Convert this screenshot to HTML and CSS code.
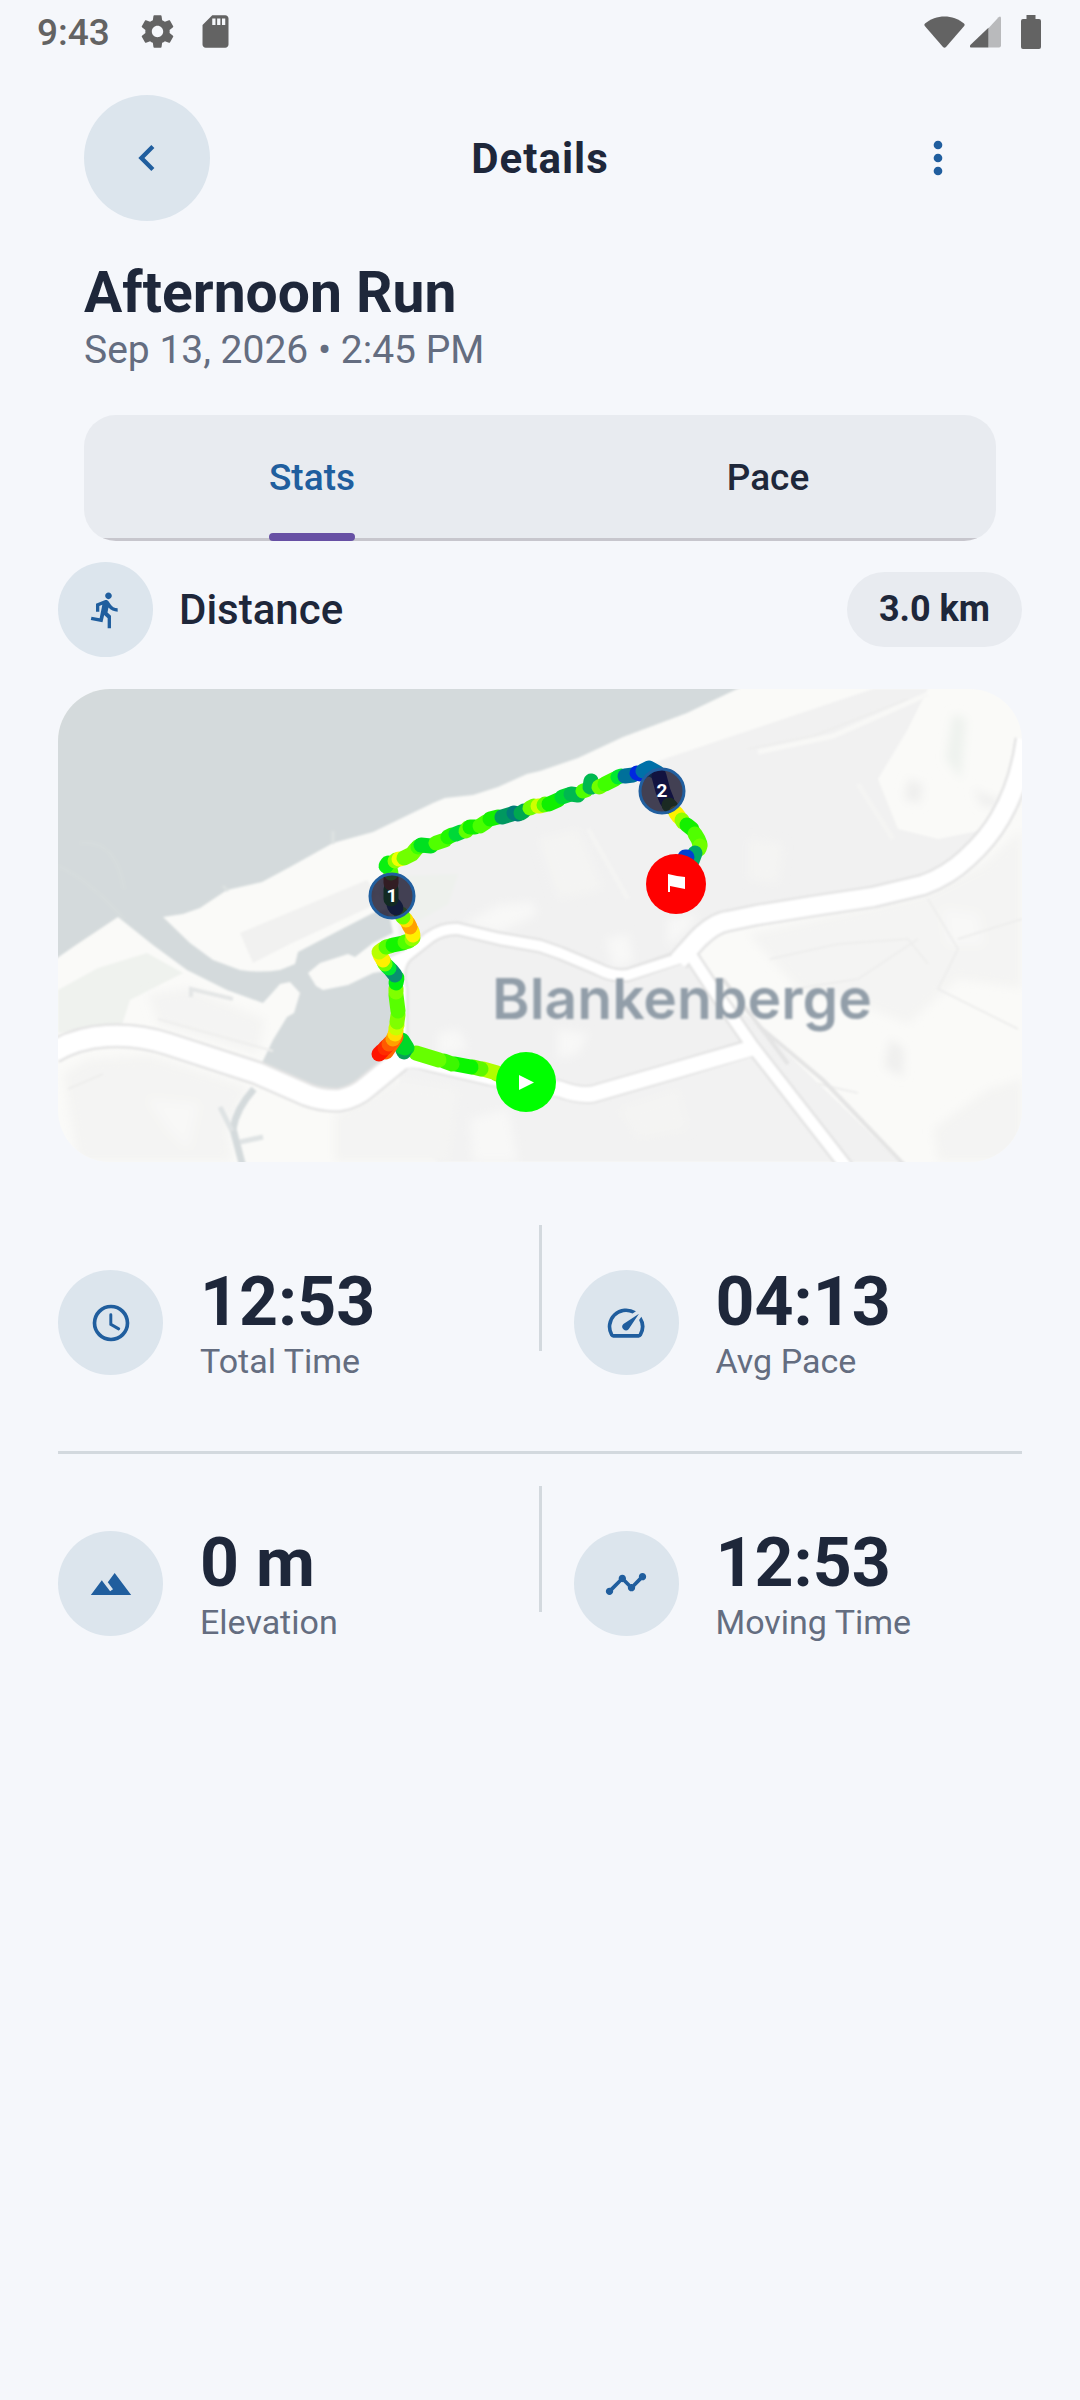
FILE: index.html
```html
<!DOCTYPE html>
<html lang="en">
<head>
    <meta charset="UTF-8">
    <meta name="viewport" content="width=device-width, initial-scale=1.0">
    <title>Afternoon Run - Details</title>
    <link rel="stylesheet" href="styles.css">
</head>
<body>
    <!-- Status bar -->
    <div class="status-bar">
        <span class="clock">9:43</span>
        <svg class="status-icon" viewBox="0 0 24 24"><path d="M19.43 12.98c.04-.32.07-.64.07-.98s-.03-.66-.07-.98l2.11-1.65c.19-.15.24-.42.12-.64l-2-3.46c-.12-.22-.39-.3-.61-.22l-2.49 1c-.52-.4-1.08-.73-1.69-.98l-.38-2.65C14.46 2.18 14.25 2 14 2h-4c-.25 0-.46.18-.49.42l-.38 2.65c-.61.25-1.17.59-1.69.98l-2.49-1c-.23-.09-.49 0-.61.22l-2 3.46c-.13.22-.07.49.12.64l2.11 1.65c-.04.32-.07.65-.07.98s.03.66.07.98l-2.11 1.65c-.19.15-.24.42-.12.64l2 3.46c.12.22.39.3.61.22l2.49-1c.52.4 1.08.73 1.69.98l.38 2.65c.03.24.24.42.49.42h4c.25 0 .46-.18.49-.42l.38-2.65c.61-.25 1.17-.59 1.69-.98l2.49 1c.23.09.49 0 .61-.22l2-3.46c.12-.22.07-.49-.12-.64l-2.11-1.65zM12 15.5c-1.93 0-3.5-1.57-3.5-3.5s1.57-3.5 3.5-3.5 3.5 1.57 3.5 3.5-1.57 3.5-3.5 3.5z"/></svg>
        <svg class="status-icon" viewBox="0 0 24 24"><path d="M18 2h-8L4.02 8 4 20c0 1.1.9 2 2 2h12c1.1 0 2-.9 2-2V4c0-1.1-.9-2-2-2zm-6 6h-2V4h2v4zm3 0h-2V4h2v4zm3 0h-2V4h2v4z"/></svg>
        <div class="status-right">
            <svg class="wifi" viewBox="0 0 41 32"><path d="M1 7.500C12-2 29-2 40 7.500q1.200 1.200.2 2.500L22 31q-1.500 1.600-3 0L.8 10q-1-1.300.2-2.500z"/></svg>
            <svg class="signal" viewBox="0 0 32 32"><path class="dim" d="M19 12 29.500.8Q32-1 32 2v28q0 2-2 2H19z"/><path d="M19 11.500V32H2q-3.500 0-1.400-2.800z"/></svg>
            <svg class="battery" viewBox="0 0 20 34"><path d="M5.500 0h9v4H18q2 0 2 2v26q0 2-2 2H2q-2 0-2-2V6q0-2 2-2h3.500z"/></svg>
        </div>
    </div>

    <!-- Top navigation -->
    <header class="header">
        <button type="button" class="back-btn" aria-label="Back">
            <svg viewBox="0 0 24 24"><path d="M15.410 7.410 14 6l-6 6 6 6 1.410-1.410L10.830 12z"/></svg>
        </button>
        <h1>Details</h1>
        <button type="button" class="menu-btn" aria-label="More options">
            <svg viewBox="0 0 24 24"><circle cx="12" cy="6" r="2"/><circle cx="12" cy="12" r="2"/><circle cx="12" cy="18" r="2"/></svg>
        </button>
    </header>

    <section class="activity">
        <h2>Afternoon Run</h2>
        <p>Sep 13, 2026 • 2:45 PM</p>
    </section>

    <div class="tabs" role="tablist">
        <button type="button" class="tab active" role="tab" aria-selected="true"><span>Stats</span></button>
        <button type="button" class="tab" role="tab" aria-selected="false"><span>Pace</span></button>
    </div>

    <main>
        <div class="distance">
            <div class="icon-circle small">
                <svg viewBox="0 0 24 24"><path d="M13.490 5.480c1.100 0 2-.9 2-2s-.9-2-2-2-2 .9-2 2 .9 2 2 2zm-3.600 13.900l1-4.400 2.100 2v6h2v-7.500l-2.100-2 .6-3c1.300 1.500 3.300 2.500 5.500 2.500v-2c-1.900 0-3.500-1-4.300-2.400l-1-1.600c-.4-.6-1-1-1.700-1-.3 0-.5.1-.8.1l-5.200 2.200v4.700h2v-3.400l1.800-.7-1.600 8.100-4.900-1-.4 2 7 1.400z"/></svg>
            </div>
            <span class="distance-label">Distance</span>
            <span class="pill">3.0 km</span>
        </div>

        <!-- Route map -->
        <svg class="map" viewBox="0 0 964 473" preserveAspectRatio="xMidYMid slice" role="img" aria-label="Route map">
            <defs>
                <filter id="soft" x="-2%" y="-2%" width="104%" height="104%"><feGaussianBlur stdDeviation="1.3"/></filter>
                <filter id="patchy" x="-5%" y="-5%" width="110%" height="110%"><feGaussianBlur stdDeviation="5"/></filter>
            </defs>
            <rect width="964" height="473" fill="#fafaf8"/>
            <g filter="url(#soft)">
                <!-- Built-up areas -->
                <path fill="#f1f1f1" d="M815 0 782 11 609 69 480 118 355 163 328 180 319 204 340 232 342 268 349 371 432 388 502 399 535 406 695 359 785 473H842L702 338 655 298 635 268 662 234 755 218 865 196 909 171 930 140 880 150 840 140 820 90 850 40 870 0z"/>
                <path fill="#f2f2f2" d="M342 373 432 390 535 408 695 361 785 473H380L340 440z"/>
                <path fill="#f1f1f0" d="M182 244 309 191 319 204 312 218 232 255 195 274z"/>
                <path fill="#eff2ee" d="M0 301 40 279 89 264 125 284 72 311 64 336 0 344z"/>
                <path fill="#eef1ed" d="M326 188 400 185 390 215 345 240z"/>
            </g>
            <g filter="url(#patchy)">
                <path fill="#f4f4f3" d="M5 385 30 370 92 366 190 398 170 441 175 473H20zM132 299 207 330 200 365 100 335 90 305zM690 245 865 205 925 175 964 140V300L900 290 850 335 800 315 740 300zM875 440 930 400 964 390V473H880zM276 425 340 390 400 400 390 473H276z"/>
                <path fill="#f8f8f7" d="M405 236 440 216 476 213 478 226 440 244zM548 250 570 245 576 272 556 280zM610 230 640 225 630 240 610 258zM500 340 530 345 520 365 500 370zM380 345 400 340 410 360 380 368zM412 430 450 420 460 473H415zM885 220 920 225 925 255 890 255zM90 410 140 415 130 460 110 440z"/>
                <path fill="#f4f4f3" d="M480 150 520 140 545 200 500 210zM690 150 725 155 720 195 690 190zM560 420 620 400 630 440 580 450z"/>
                <path fill="#efefee" d="M850 90 865 95 862 115 846 110zM832 350 846 360 845 388 826 378zM915 100 950 115 925 118z"/>
                <path fill="#eef2ee" d="M895 25 908 30 903 90 888 70z"/>
            </g>
            <g filter="url(#soft)">
                <!-- Sea and harbour -->
                <path fill="#d4dadc" d="M-5-5H690L679 0 654 12 629 24 565 48 520 69 482 82 469 85 440 98 415 106 387 109 375 114 315 143 275 154 232 178 204 193 169 201 142 219 125 225 105 228 132 254 155 271 182 281Q202 284 222 281L237 275 240 263 282 241 315 224 330 220 335 244 315 254 297 268 290 265 262 274 250 284 258 297 265 301 290 296 315 284 334 281V341L328 362 322 374Q310 392 295 396 280 404 265 401L239 394 202 378 215 351 229 328 236 324 242 304 232 293 222 295 215 303 205 314 169 301 129 281 95 256 60 228 15 258-5 272z"/>
                <path fill="none" stroke="#d4dadc" stroke-width="7" d="M196 400Q178 420 175 440L185 478"/>
                <path fill="none" stroke="#dfe3e4" stroke-width="5" d="M162 418 174 442M182 453 205 448"/>
                <path fill="none" stroke="#dde2e2" stroke-width="3" d="M275 155V142M170 202 165 197"/>
                <path fill="none" stroke="#d6dcdd" stroke-width="4" d="M0 177Q30 190 66 230M22 154Q58 150 66 200"/>
                <path fill="none" stroke="#e4e6e6" stroke-width="4" d="M133 308V300L175 310"/>
                <!-- Minor streets -->
                <path fill="none" stroke="#f8f8f6" stroke-width="5" d="M700 63 775 47 870 5"/>
                <path fill="none" stroke="#f4f4f3" stroke-width="5" d="M530 140 570 210M800 95 835 150"/>
                <path fill="none" stroke="#eeeeed" stroke-width="2" d="M690 60 755 47 850 10M712 270 780 255 850 250 870 275M735 300 800 290 860 250M870 210 900 260 880 300 960 340M900 250 964 230M760 395 800 404M10 400 45 385M100 330 215 362"/>
                <!-- Road casings -->
                <g fill="none" stroke="#e4e4e4" stroke-linejoin="round">
                    <path stroke-width="25" d="M-5 363Q18 349 49 347T110 355L199 384 249 406Q265 412 282 411 298 408 309 398L342 371"/>
                    <path stroke-width="19" d="M342 371Q356 368 372 374L432 388 502 400Q520 407 535 405L615 382 695 358"/>
                    <path stroke-width="15" d="M330 275 349 266 372 248Q385 239 400 240L442 250 482 257 502 264 540 280Q555 288 570 286L622 268M349 266Q337 278 343 300V371"/>
                    <path stroke-width="23" d="M620 272 640 250Q656 234 670 232L699 226 755 217 815 208 865 196Q890 187 909 169 930 150 942 129 962 95 968 50"/>
                    <path stroke-width="16" d="M632 265 655 300 695 358 790 480"/>
                    <path stroke-width="4" d="M665 290 702 338 765 391 850 480M700 335 730 375"/>
                </g>
                <!-- Road surfaces -->
                <g fill="none" stroke="#fff" stroke-linejoin="round">
                    <path stroke-width="20" d="M-5 363Q18 349 49 347T110 355L199 384 249 406Q265 412 282 411 298 408 309 398L342 371"/>
                    <path stroke-width="15" d="M335 374Q356 368 372 374L432 388 502 400Q520 407 535 405L615 382 698 358"/>
                    <path stroke-width="10" d="M330 275 349 266 372 248Q385 239 400 240L442 250 482 257 502 264 540 280Q555 288 570 286L626 268M349 266Q337 278 343 300V371"/>
                    <path stroke-width="18" d="M620 272 640 250Q656 234 670 232L699 226 755 217 815 208 865 196Q890 187 909 169 930 150 942 129 962 95 968 50"/>
                    <path stroke-width="11" d="M632 265 655 300 695 358 790 480"/>
                </g>
                <text class="map-label" x="624" y="330">Blankenberge</text>
            </g>

            <!-- Track coloured by speed -->
            <g class="track">
                <path stroke="#8cff00" d="M468 393 439 385"/>
                <path stroke="#b0ff00" d="M439 384 425 380"/>
                <path stroke="#5cf800" d="M423 380 415 378"/>
                <path stroke="#0af500" d="M413 378 397 375"/>
                <path stroke="#3cf800" d="M394 375 386 372"/>
                <path stroke="#66ff00" d="M381 371 358 364"/>
                <path stroke="#00d828" d="M344 351 349 359"/>
                <path stroke="#08a058" d="M346 363 345 361"/>
                <path stroke="#00d828" d="M344 358 347 359"/>
                <path stroke="#ff6400" d="M338 348 328 363"/>
                <path stroke="#ff1400" d="M321 365 324 362"/>
                <path stroke="#ff2c00" d="M327 359 329 357"/>
                <path stroke="#ff5a00" d="M331 355 333 353"/>
                <path stroke="#ffa000" d="M335 350 336 348"/>
                <path stroke="#ffe000" d="M337 345 338 342"/>
                <path stroke="#c8ff00" d="M338 339 339 336"/>
                <path stroke="#80ff00" d="M339 333 340 326"/>
                <path stroke="#58ff00" d="M340 322 338 306"/>
                <path stroke="#80ff00" d="M338 303 338 299"/>
                <path stroke="#00f010" d="M338 294 339 289"/>
                <path stroke="#089070" d="M337 286 333 281"/>
                <path stroke="#00e830" d="M331 279 329 277"/>
                <path stroke="#70ff00" d="M327 275 326 273"/>
                <path stroke="#fff000" d="M325 271 322 266"/>
                <path stroke="#b8ff00" d="M321 263 325 260"/>
                <path stroke="#58ff00" d="M328 258 332 257"/>
                <path stroke="#14f500" d="M335 256 345 254"/>
                <path stroke="#50ff00" d="M347 253 351 252"/>
                <path stroke="#90ff00" d="M354 250 355 249"/>
                <path stroke="#fff000" d="M355 246 354 242"/>
                <path stroke="#ffa000" d="M352 238 350 234"/>
                <path stroke="#ffe000" d="M348 231 347 230"/>
                <path stroke="#70ff00" d="M345 228 343 225"/>
                <path stroke="#003878" d="M338 219 336 216"/>
                <path stroke="#008000" d="M333 210 333 200"/>
                <path stroke="#a04000" d="M333 194 333 188"/>
                <path stroke="#50ff00" d="M333 184 332 180"/>
                <path stroke="#0af010" d="M328 177 330 174"/>
                <path stroke="#88ff00" d="M337 172 338 171"/>
                <path stroke="#f0ff00" d="M341 170 342 170"/>
                <path stroke="#70ff00" d="M346 169 354 165 358 160"/>
                <path stroke="#3cff00" d="M360 158 362 157"/>
                <path stroke="#00e020" d="M363 156 373 157"/>
                <path stroke="#50ff00" d="M378 154 387 151"/>
                <path stroke="#20f800" d="M390 148 394 146"/>
                <path stroke="#00d838" d="M398 145 403 143"/>
                <path stroke="#60ff00" d="M408 142 410 139"/>
                <path stroke="#10f000" d="M412 138 417 138"/>
                <path stroke="#48ff00" d="M422 137 428 133"/>
                <path stroke="#14f000" d="M432 130 440 128"/>
                <path stroke="#009860" d="M444 128 454 125"/>
                <path stroke="#007c78" d="M456 124 460 125"/>
                <path stroke="#00a850" d="M463 124 466 122"/>
                <path stroke="#70ff00" d="M472 119 476 117"/>
                <path stroke="#d0ff00" d="M480 117 482 117"/>
                <path stroke="#60ff00" d="M486 116 487 115"/>
                <path stroke="#10f000" d="M491 115 500 111"/>
                <path stroke="#00d830" d="M504 108 510 106"/>
                <path stroke="#00b850" d="M513 105 520 106"/>
                <path stroke="#50ff00" d="M525 102 528 101"/>
                <path stroke="#00b850" d="M532 98 533 92 534 98"/>
                <path stroke="#70ff00" d="M541 98 543 97"/>
                <path stroke="#40ff00" d="M547 95 557 90"/>
                <path stroke="#00e830" d="M560 88 563 87"/>
                <path stroke="#00709a" d="M567 87 575 86"/>
                <path stroke="#0028e0" d="M579 84 582 85"/>
                <path stroke="#0070a8" d="M585 82 591 79 600 84"/>
                <path stroke="#001090" d="M601 87 605 102 609 112"/>
                <path stroke="#308000" d="M611 116 613 118"/>
                <path stroke="#fff000" d="M618 124 621 128"/>
                <path stroke="#90ff00" d="M624 131 625 133"/>
                <path stroke="#14f000" d="M629 136 634 140"/>
                <path stroke="#50ff00" d="M637 145 640 150 642 155"/>
                <path stroke="#70ff00" d="M642 157 641 160"/>
                <path stroke="#00a868" d="M637 164 634 172"/>
                <path stroke="#0040d0" d="M629 168 627 168"/>
            </g>

            <!-- Kilometre markers -->
            <g class="km-marker">
                <circle cx="334" cy="207" r="22"/>
                <text x="334" y="213">1</text>
                <circle cx="604" cy="102" r="22"/>
                <text x="604" y="108">2</text>
            </g>

            <!-- Start and finish -->
            <circle cx="468" cy="393" r="30" fill="#0f0"/>
            <path fill="#fff" d="M461 386v15l15-7.500z"/>
            <circle cx="618" cy="195" r="30" fill="#f00"/>
            <path fill="#fff" d="M610 185 619 187 627 188V200L612 197V203H610z"/>
        </svg>

        <!-- Stats grid -->
        <div class="stats-row">
            <div class="stat">
                <div class="icon-circle">
                    <svg viewBox="0 0 24 24"><path d="M12 2a10 10 0 1 0 0 20 10 10 0 0 0 0-20zm0 18a8 8 0 1 1 0-16 8 8 0 0 1 0 16z"/><path class="hands" d="M11.900 7.500v5.200l4.300 2.500"/></svg>
                </div>
                <div class="stat-text">
                    <strong>12:53</strong>
                    <span>Total Time</span>
                </div>
            </div>
            <div class="divider"></div>
            <div class="stat">
                <div class="icon-circle">
                    <svg viewBox="0 0 24 24"><path d="M20.380 8.570l-1.230 1.850a8 8 0 0 1-.22 7.580H5.070A8 8 0 0 1 15.580 6.850l1.850-1.230A10 10 0 0 0 3.350 19a2 2 0 0 0 1.720 1h13.850a2 2 0 0 0 1.740-1 10 10 0 0 0-.27-10.440zm-9.790 6.840a2 2 0 0 0 2.830 0l5.660-8.490-8.490 5.660a2 2 0 0 0 0 2.830z"/></svg>
                </div>
                <div class="stat-text">
                    <strong>04:13</strong>
                    <span>Avg Pace</span>
                </div>
            </div>
        </div>
        <div class="stats-row">
            <div class="stat">
                <div class="icon-circle">
                    <svg viewBox="0 0 24 24"><path d="M14 6l-3.750 5 2.850 3.800-1.600 1.200C9.810 13.750 7 10 7 10l-6 8h22L14 6z"/></svg>
                </div>
                <div class="stat-text">
                    <strong>0 m</strong>
                    <span>Elevation</span>
                </div>
            </div>
            <div class="divider"></div>
            <div class="stat">
                <div class="icon-circle">
                    <svg viewBox="0 0 24 24"><path d="M23 8c0 1.100-.9 2-2 2-.18 0-.35-.02-.51-.07l-3.560 3.550c.05.16.07.34.07.52 0 1.100-.9 2-2 2s-2-.9-2-2c0-.18.02-.36.07-.52l-2.550-2.550c-.16.05-.34.07-.52.07s-.36-.02-.52-.07l-4.550 4.560c.05.16.07.33.07.51 0 1.100-.9 2-2 2s-2-.9-2-2 .9-2 2-2c.18 0 .35.02.51.07l4.560-4.550C8.020 9.360 8 9.180 8 9c0-1.100.9-2 2-2s2 .9 2 2c0 .18-.02.36-.07.52l2.550 2.550c.16-.05.34-.07.52-.07s.36.02.52.07l3.550-3.560C19.020 8.350 19 8.180 19 8c0-1.100.9-2 2-2s2 .9 2 2z"/></svg>
                </div>
                <div class="stat-text">
                    <strong>12:53</strong>
                    <span>Moving Time</span>
                </div>
            </div>
        </div>
    </main>
</body>
</html>
```
FILE: styles.css
```css
:root {
    --background: #f5f7fb;
    --primary: #205e9e;
    --primary-soft: #dce5ed;
    --surface: #e8ebf0;
    --divider: #d3d9de;
    --indicator: #6750a4;
    --text-dark: #1e273a;
    --text-medium: #646d80;
    --status: #636363;
}

/* Basic Reset */
* {
    box-sizing: border-box;
    margin: 0;
    padding: 0;
}

body {
    min-height: 100vh;
    background: var(--background);
    color: var(--text-dark);
    font-family: Roboto, sans-serif;
}

svg {
    display: block;
    fill: currentColor;
}

button {
    border: none;
    background: none;
    color: inherit;
    font: inherit;
    cursor: pointer;
}

/* Status bar */
.status-bar {
    display: flex;
    align-items: center;
    height: 63px;
    padding: 0 39px 0 37px;
    color: var(--status);
}

.clock {
    margin-right: 28px;
    padding-top: 2px;
    font-size: 37px;
    font-weight: 500;
    line-height: 44px;
}

.status-icon {
    width: 39px;
    height: 39px;
    margin-right: 19px;
}

.status-right {
    display: flex;
    align-items: center;
    margin-left: auto;
}

.wifi {
    width: 41px;
    height: 32px;
}

.signal {
    width: 31px;
    height: 32px;
    margin: 0 20px 0 5px;
}

.signal .dim {
    fill: #b9babc;
}

.battery {
    width: 20px;
    height: 34px;
}

/* Header */
.header {
    display: grid;
    grid-template-columns: 1fr auto 1fr;
    align-items: center;
    padding: 32px 84px 37px;
}

.header h1 {
    padding-top: 2px;
    font-size: 42px;
    font-weight: 700;
    line-height: 50px;
    letter-spacing: 1px;
}

.header button {
    display: flex;
    align-items: center;
    justify-content: center;
    height: 126px;
    color: var(--primary);
}

.header svg {
    width: 52px;
    height: 52px;
}

.header .back-btn {
    width: 126px;
    border-radius: 50%;
    background: var(--primary-soft);
}

.header .menu-btn {
    width: 116px;
    justify-self: end;
}

/* Activity title */
.activity {
    padding: 0 84px 42px;
}

.activity h2 {
    font-size: 57px;
    font-weight: 700;
    line-height: 69px;
}

.activity p {
    color: var(--text-medium);
    font-size: 39px;
    line-height: 46px;
}

/* Tabs */
.tabs {
    display: flex;
    height: 126px;
    margin: 0 84px 21px;
    border-radius: 32px;
    background: linear-gradient(#c7c6cd, #c7c6cd) no-repeat bottom / 100% 3px var(--surface);
}

.tab {
    display: flex;
    flex: 1;
    justify-content: center;
    font-size: 37px;
    font-weight: 500;
}

.tab span {
    position: relative;
    display: flex;
    align-items: center;
    height: 100%;
    padding-bottom: 2px;
}

.tab.active {
    color: var(--primary);
}

.tab.active span::after { /* Indicator bar */
    content: '';
    position: absolute;
    right: 0;
    bottom: 0;
    left: 0;
    height: 8px;
    border-radius: 4px;
    background: var(--indicator);
}

/* Distance and map */
main {
    padding: 0 58px;
}

.icon-circle {
    display: flex;
    flex: none;
    align-items: center;
    justify-content: center;
    width: 105px;
    height: 105px;
    border-radius: 50%;
    background: var(--primary-soft);
    color: var(--primary);
}

.icon-circle svg {
    width: 44px;
    height: 44px;
}

.icon-circle.small {
    width: 95px;
    height: 95px;
}

.icon-circle.small svg {
    width: 40px;
    height: 40px;
}

.hands {
    fill: none;
    stroke: currentColor;
    stroke-width: 1.6;
    stroke-linecap: round;
}

.distance {
    display: flex;
    align-items: center;
    margin-bottom: 32px;
}

.distance-label {
    margin-left: 26px;
    font-size: 42px;
    font-weight: 500;
    line-height: 50px;
}

.pill {
    margin-left: auto;
    padding: 16px 32px;
    border-radius: 40px;
    background: var(--surface);
    font-size: 36px;
    font-weight: 700;
    line-height: 43px;
}

.map {
    width: 100%;
    margin-bottom: 63px;
    border-radius: 52px;
    overflow: hidden;
}

.map-label {
    fill: #929ea9;
    font-family: Inter, sans-serif;
    font-size: 57px;
    font-weight: 600;
    text-anchor: middle;
}

.track {
    fill: none;
    stroke-width: 15;
    stroke-linecap: round;
    stroke-linejoin: round;
}

.km-marker circle {
    fill: rgba(22, 20, 44, 0.8);
    stroke: #215f9f;
    stroke-width: 3;
}

.km-marker text {
    fill: #fff;
    font-size: 19px;
    font-weight: 700;
    text-anchor: middle;
}

/* Stats */
.stats-row {
    display: grid;
    grid-template-columns: 1fr 3px 1fr;
}

.stats-row + .stats-row {
    margin-top: 31px;
    padding-top: 32px;
    border-top: 3px solid var(--divider);
}

.divider {
    height: 126px;
    background: var(--divider);
}

.stat {
    display: flex;
    align-items: center;
    gap: 37px;
    height: 195px;
}

.divider + .stat {
    padding-left: 32px;
}

.stat-text {
    padding-bottom: 4px;
}

.stat-text strong,
.stat-text span {
    display: block;
}

.stat-text strong {
    font-size: 68px;
    font-weight: 700;
    line-height: 80px;
}

.stat-text span {
    color: var(--text-medium);
    font-size: 34px;
    line-height: 38px;
}
```
